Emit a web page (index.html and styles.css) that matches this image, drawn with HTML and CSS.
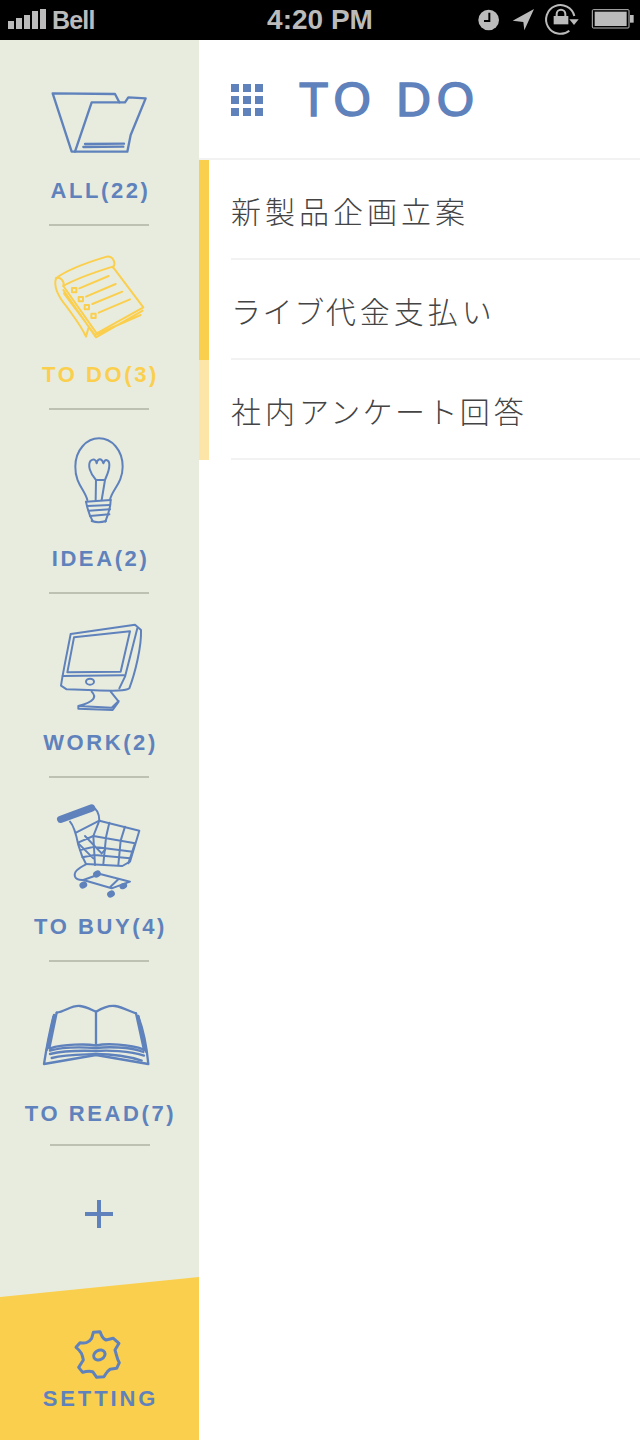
FILE: index.html
```html
<!DOCTYPE html>
<html lang="ja">
<head>
    <meta charset="UTF-8">
    <title>TO DO</title>
    <link rel="stylesheet" href="styles.css">
</head>
<body>
    <header class="status-bar">
        <div class="status-left">
            <div class="signal">
                <span class="signal-bar bar-1"></span>
                <span class="signal-bar bar-2"></span>
                <span class="signal-bar bar-3"></span>
                <span class="signal-bar bar-4"></span>
                <span class="signal-bar bar-5"></span>
            </div>
            <span class="carrier">Bell</span>
        </div>
        <span class="clock">4:20 PM</span>
        <svg class="status-icons" viewBox="0 0 510 120">
            <circle cx="56" cy="60" r="31" fill="#bbb"/>
            <path d="M58 38V63H42" fill="none" stroke="#000" stroke-width="6"/>
            <path d="M192 27L128 62L160 66L163 91Z" fill="#bbb"/>
            <path d="M313 48A43 43 0 1 0 298 92" fill="none" stroke="#bbb" stroke-width="6"/>
            <path d="M298 58H326L312 75Z" fill="#bbb"/>
            <rect x="251" y="48" width="44" height="25" fill="#bbb"/>
            <path d="M260 48V42A13 13 0 0 1 286 42V48" fill="none" stroke="#bbb" stroke-width="6"/>
            <rect x="367" y="29" width="110" height="55" rx="3" fill="none" stroke="#bbb" stroke-width="3"/>
            <rect x="374" y="35" width="96" height="43" fill="#bbb"/>
            <path d="M480 45H491V68H480Z" fill="#bbb"/>
        </svg>
    </header>

    <div class="app">
        <aside class="sidebar">
            <nav class="nav">
                <a class="nav-item">
                    <svg class="nav-icon icon-heavy" viewBox="0 -84 597 390">
                        <path d="M158 70L345 72L358 97H375L385 82L437 85L392 195L382 245L215 245Z"/>
                        <path d="M358 97H275L225 245"/>
                        <path d="M255 222L372 221M250 231L370 230"/>
                    </svg>
                    <span class="nav-label">ALL(22)</span>
                </a>
                <a class="nav-item is-active">
                    <svg class="nav-icon" viewBox="0 468 597 390">
                        <path d="M168 625C200 600 270 575 320 560C340 558 350 582 338 592"/>
                        <path d="M190 648C230 625 290 605 338 590L430 712L290 790Z"/>
                        <path d="M168 625C160 650 175 680 200 710C225 745 245 770 258 800L265 775"/>
                        <path d="M168 625C180 618 195 635 190 648"/>
                        <path d="M190 660L288 802L428 722M192 670L285 795L422 735"/>
                        <path d="M238 655L326 618M258 680L347 642M277 702L367 665M296 728L390 688"/>
                        <path d="M216 654H229V667H216ZM236 681H249V694H236ZM254 705H267V718H254ZM274 731H287V744H274Z"/>
                    </svg>
                    <span class="nav-label">TO DO(3)</span>
                </a>
                <a class="nav-item">
                    <svg class="nav-icon" viewBox="0 -30 597 390">
                        <path d="M262 240C255 210 225 190 226 140C226 90 260 55 297 55C335 55 368 90 368 140C368 190 335 210 330 240"/>
                        <path d="M258 245L332 240M262 258L330 255M266 272L330 268M270 288L328 283M275 303Q295 310 318 303"/>
                        <path d="M258 245C262 265 270 290 278 303M332 240C332 265 322 290 316 305"/>
                        <path d="M287 240L288 180C270 160 262 135 272 122C280 115 288 118 290 130C292 115 305 112 310 130C315 115 328 118 328 135C328 155 318 170 315 180L305 240M290 180H315"/>
                    </svg>
                    <span class="nav-label">IDEA(2)</span>
                </a>
                <a class="nav-item">
                    <svg class="nav-icon" viewBox="0 522 597 390">
                        <path d="M212 642L405 614L423 630C425 680 405 760 388 805C380 812 370 815 200 808L183 797C190 750 205 680 212 642Z"/>
                        <path d="M222 652L390 634L362 755L202 757Z"/>
                        <path d="M188 768L372 766M412 625L375 770L358 805"/>
                        <ellipse cx="270" cy="785" rx="12" ry="9"/>
                        <path d="M275 815C290 830 285 845 235 858L235 866L338 870L356 845L332 815M235 858L335 863L356 843"/>
                    </svg>
                    <span class="nav-label">WORK(2)</span>
                </a>
                <a class="nav-item">
                    <svg class="nav-icon" viewBox="-150 -66 597 390">
                        <path class="icon-fat" d="M32 58L125 24"/>
                        <path d="M125 20C145 28 148 45 148 62M60 65C72 78 78 100 85 135C92 160 100 178 108 192"/>
                        <path d="M78 98L148 62L268 92L240 185L217 198L108 192"/>
                        <path d="M148 62L130 108L135 195M130 108L255 130L235 190M178 68L168 112L160 192M225 80L212 122L205 195"/>
                        <path d="M84 128L130 108M90 150L132 140M97 172L134 165M130 140L248 155M134 165L240 175M105 108L155 160L165 150M85 130L130 175"/>
                        <path d="M108 193C85 205 70 215 75 230C80 242 95 240 100 240L185 265L240 245L150 222L100 240M205 238L180 262"/>
                        <g class="icon-solid">
                            <ellipse cx="100" cy="255" rx="9" ry="7" transform="rotate(-25 100 255)"/>
                            <ellipse cx="141" cy="222" rx="9" ry="7" transform="rotate(-25 141 222)"/>
                            <ellipse cx="183" cy="282" rx="9" ry="7" transform="rotate(-25 183 282)"/>
                            <ellipse cx="220" cy="258" rx="9" ry="6" transform="rotate(-25 220 258)"/>
                        </g>
                    </svg>
                    <span class="nav-label">TO BUY(4)</span>
                </a>
                <a class="nav-item nav-item-last">
                    <svg class="nav-icon icon-heavy" viewBox="0 516 597 390">
                        <path d="M170 668C195 665 215 645 240 648C260 650 275 660 288 665C305 655 325 645 345 648C370 652 390 665 408 670"/>
                        <path d="M288 665V765M170 668L148 775M408 670L432 780M162 675L140 780M415 678L438 785"/>
                        <path d="M160 680C150 720 140 770 132 822L288 795L445 822C440 770 430 720 415 680"/>
                        <path d="M150 775C190 762 260 762 288 766C320 760 390 762 430 778M150 782C190 770 260 772 288 774C320 770 390 770 430 786M150 792C200 780 260 782 288 783C320 780 390 782 432 797M155 804C200 792 260 794 288 792C330 792 380 797 425 812"/>
                    </svg>
                    <span class="nav-label">TO READ(7)</span>
                </a>
            </nav>

            <button class="add-button">
                <svg class="add-icon" viewBox="0 0 28 28"><path d="M12 0H16V12H28V16H16V28H12V16H0V12H12Z"/></svg>
            </button>

            <a class="setting">
                <svg class="setting-icon" viewBox="0 321 597 312">
                    <path d="M280 487L300 485C305 495 305 505 318 510L340 505L357 520L345 540C350 555 350 565 358 578L350 595L330 598C318 605 316 615 312 620L290 622L278 605C265 602 255 605 248 607L236 592L250 570C247 555 245 545 228 532L240 518C255 520 265 520 275 505Z"/>
                    <ellipse cx="298" cy="555" rx="18" ry="14" transform="rotate(-30 298 555)"/>
                </svg>
                <span class="nav-label">SETTING</span>
            </a>
        </aside>

        <main class="content">
            <div class="title-bar">
                <div class="grid-icon">
                    <i></i><i></i><i></i>
                    <i></i><i></i><i></i>
                    <i></i><i></i><i></i>
                </div>
                <h1 class="title">TO DO</h1>
            </div>
            <ul class="task-list">
                <li class="task task-high"><span class="task-text">新製品企画立案</span></li>
                <li class="task task-high"><span class="task-text"><span class="kana-tight">ライブ</span>代金支払<span class="kana">い</span></span></li>
                <li class="task task-low"><span class="task-text">社内<span class="kana">アンケート</span>回答</span></li>
            </ul>
        </main>
    </div>
</body>
</html>
```

FILE: styles.css
```css
* {
    box-sizing: border-box;
}
body {
    margin: 0;
    height: 1440px;
    overflow: hidden;
    background-color: #FFFFFF;
    font-family: "Liberation Sans", Arial, sans-serif;
}

/* status bar */
.status-bar {
    display: grid;
    grid-template-columns: 1fr auto 1fr;
    align-items: center;
    height: 40px;
    background-color: #000000;
    color: #BBBBBB;
    font-weight: bold;
}
.status-left {
    display: flex;
    align-items: center;
    gap: 6px;
    padding-left: 8px;
}
.signal {
    display: flex;
    align-items: flex-end;
    gap: 2px;
    height: 20px;
    margin-top: -2px;
}
.signal-bar {
    width: 6px;
    background-color: #BBBBBB;
}
.bar-1 { height: 8px; }
.bar-2 { height: 11px; }
.bar-3 { height: 14px; }
.bar-4 { height: 18px; }
.bar-5 { height: 20px; }
.carrier {
    font-size: 25px;
    letter-spacing: -0.8px;
}
.clock {
    font-size: 28px;
}
.status-icons {
    justify-self: end;
    width: 170px;
    height: 40px;
}

/* layout */
.app {
    display: flex;
    height: 1400px;
}
.sidebar {
    display: flex;
    flex-direction: column;
    flex: 0 0 199px;
    background-color: #E8ECDF;
    color: #5F82BC;
}

/* nav */
.nav {
    padding-top: 2px;
}
.nav-item {
    display: block;
    height: 184px;
}
.nav-item::after {
    content: "";
    display: block;
    width: 100px;
    height: 2px;
    margin: 16px 0 0 49px;
    background-color: #BDC1B1;
}
.nav-item-last .nav-label {
    margin-top: 3px;
}
.nav-item-last::after {
    margin: 13px 0 0 50px;
}
.nav-icon {
    display: block;
    width: 199px;
    height: 130px;
    fill: none;
    stroke: currentColor;
    stroke-width: 6;
    stroke-linejoin: round;
    stroke-linecap: round;
}
.icon-heavy {
    stroke-width: 7;
}
.icon-fat {
    stroke-width: 22;
}
.icon-solid {
    fill: currentColor;
}
.nav-label {
    display: block;
    height: 36px;
    line-height: 38px;
    text-align: center;
    text-indent: 2px;
    font-size: 22px;
    font-weight: bold;
    letter-spacing: 2.6px;
    white-space: nowrap;
}
.is-active {
    color: #FBCF4E;
}

/* add button */
.add-button {
    display: block;
    width: 28px;
    height: 28px;
    margin: 54px 0 0 85px;
    padding: 0;
    border: none;
    background: none;
}
.add-icon {
    display: block;
    width: 28px;
    height: 28px;
    fill: #5F82BC;
}

/* setting */
.setting {
    display: block;
    height: 163px;
    margin-top: auto;
    background-color: #FBCF4E;
    clip-path: polygon(0 20px, 100% 0, 100% 100%, 0 100%);
}
.setting .nav-label {
    margin-top: -1px;
    letter-spacing: 2.9px;
}
.setting-icon {
    display: block;
    width: 199px;
    height: 104px;
    fill: none;
    stroke: currentColor;
    stroke-width: 9;
    stroke-linejoin: round;
}

/* main */
.content {
    flex: 1;
    min-width: 0;
}
.title-bar {
    display: flex;
    align-items: center;
    gap: 36px;
    height: 120px;
    padding-left: 32px;
    border-bottom: 2px solid #F2F2F2;
}
.grid-icon {
    display: grid;
    grid-template-columns: repeat(3, 8px);
    grid-auto-rows: 8px;
    gap: 4px;
    margin-top: 2px;
}
.grid-icon i {
    background-color: #5F82BC;
}
.title {
    margin: 0;
    color: #5F82BC;
    font-size: 48px;
    font-weight: normal;
    letter-spacing: 6px;
    -webkit-text-stroke: 1.5px #5F82BC;
}
.task-list {
    margin: 0;
    padding: 0;
    list-style: none;
}
.task {
    height: 100px;
    padding-left: 22px;
    border-left: 10px solid #FBCF4E;
}
.task-low {
    border-left-color: #FCE5A6;
}
.task-text {
    display: flex;
    align-items: center;
    height: 100px;
    padding-top: 2px;
    border-bottom: 2px solid #F2F2F2;
    color: #444444;
    font-family: "Noto Sans CJK JP", sans-serif;
    font-size: 30px;
    font-weight: 300;
    letter-spacing: 4px;
}
.kana {
    letter-spacing: 2.4px;
}
.kana-tight {
    letter-spacing: 1.6px;
}
```
